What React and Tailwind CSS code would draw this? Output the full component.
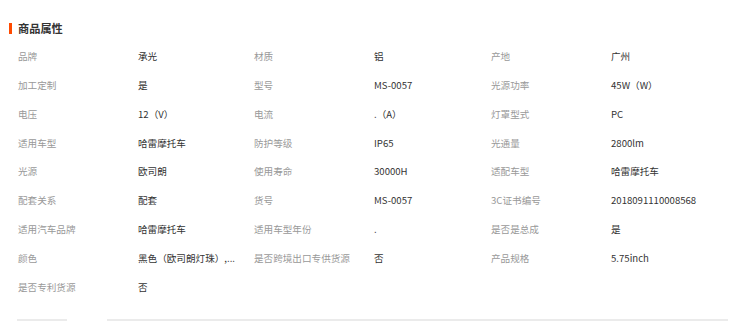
const attrs = [
  ["品牌", "承光"],
  ["材质", "铝"],
  ["产地", "广州"],
  ["加工定制", "是"],
  ["型号", "MS-0057"],
  ["光源功率", "45W（W）"],
  ["电压", "12（V）"],
  ["电流", ".（A）"],
  ["灯罩型式", "PC"],
  ["适用车型", "哈雷摩托车"],
  ["防护等级", "IP65"],
  ["光通量", "2800lm"],
  ["光源", "欧司朗"],
  ["使用寿命", "30000H"],
  ["适配车型", "哈雷摩托车"],
  ["配套关系", "配套"],
  ["货号", "MS-0057"],
  ["3C证书编号", "2018091110008568"],
  ["适用汽车品牌", "哈雷摩托车"],
  ["适用车型年份", "."],
  ["是否是总成", "是"],
  ["颜色", "黑色（欧司朗灯珠）,..."],
  ["是否跨境出口专供货源", "否"],
  ["产品规格", "5.75inch"],
  ["是否专利货源", "否"],
];

export default function App() {
  return (
    <div
      className="w-[756px] h-[321px] overflow-hidden bg-white"
      style={{ fontFamily: '"Noto Sans CJK SC", "Noto Sans", sans-serif' }}
    >
      <div className="pt-[20px] pl-[9px] h-[37px] flex items-start">
        <div className="flex items-center h-[17px] gap-[6px]">
          <span className="w-[3px] h-[11px] bg-[#ff4a00]" />
          <span className="text-[11.2px] font-bold text-[#333]">商品属性</span>
        </div>
      </div>
      <div className="mt-[5px] ml-[18px] w-[710px] grid grid-cols-[120px_116px_120px_117px_120px_117px]">
        {attrs.map(([k, v]) => (
          <div key={k} className="contents">
            <div className="h-[28.8px] flex items-center text-[9.6px] text-[#999] whitespace-nowrap">{k}</div>
            <div className="h-[28.8px] flex items-center text-[9.6px] text-[#333] whitespace-nowrap">{v}</div>
          </div>
        ))}
      </div>
      <div className="mt-[18px] flex">
        <div className="ml-[17px] w-[50px] h-[2px] bg-[#ebebeb]" />
        <div className="ml-[40px] w-[621px] h-[2px] bg-[#ebebeb]" />
      </div>
    </div>
  );
}
